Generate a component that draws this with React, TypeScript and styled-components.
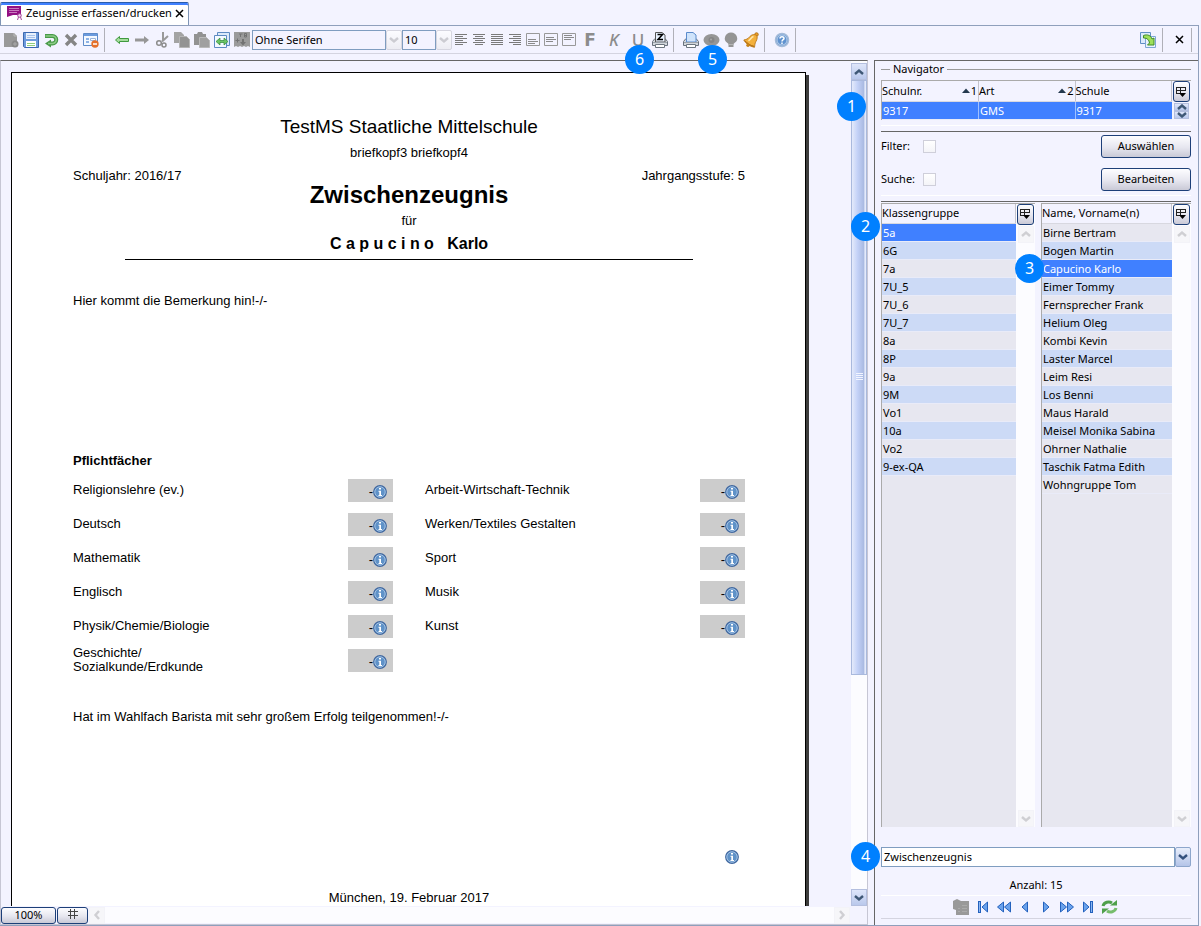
import React from "react";
import styled, { createGlobalStyle, css } from "styled-components";

const GlobalStyle = createGlobalStyle`
  *, *::before, *::after { box-sizing: border-box; }
  body {
    margin: 0;
    background: #f3f3ff;
    color: #000;
    font: 11px/16px "Noto Sans", "Open Sans", sans-serif;
  }
  button, select, input { font: inherit; color: inherit; margin: 0; }
  button { cursor: pointer; }
  h1, h2, h3, p { margin: 0; font: inherit; }
`;

const line = "#666";
const frameBlue = "#8f9fbc";
const navy = "#1d3f78";

/* ---------- window frame ---------- */

const Page = styled.div`
  display: flex;
  flex-direction: column;
  height: 100vh;
  min-height: 640px;
  padding: 2px 2px 0 0;
`;

const TabBar = styled.div`
  display: flex;
  flex: none;
  height: 23px;
`;

const Tab = styled.div`
  display: flex;
  align-items: center;
  gap: 3px;
  padding: 0 4px 2px 5px;
  background: #fff;
  border: 1px solid #7f95b5;
  border-top-color: #2a5cab;
  border-bottom: 0;
  border-radius: 2px 2px 0 0;
  box-shadow: inset 0 2px 0 #4080ff;
`;

const TabLabel = styled.span`
  font-size: 11px;
  white-space: nowrap;
`;

const PlainButton = styled.button`
  display: flex;
  align-items: center;
  justify-content: center;
  padding: 0;
  border: 0;
  background: none;
`;

const Frame = styled.div`
  display: flex;
  flex: 1;
  flex-direction: column;
  min-height: 0;
  border: 1px solid ${frameBlue};
  border-left: 0;
`;

const Main = styled.div`
  display: flex;
  flex: 1;
  min-height: 0;
`;

/* ---------- toolbar ---------- */

const Toolbar = styled.div`
  display: flex;
  flex: none;
  align-items: center;
  height: 28px;
  margin-bottom: 6px;
  padding-left: 1px;
  border-bottom: 1px solid #d4d4e0;
`;

const ToolButton = styled(PlainButton)<{ $w?: number }>`
  position: relative;
  flex: none;
  width: ${(p) => p.$w ?? 20}px;
  height: 24px;
`;

const Separator = styled.span<{ $before?: number; $after?: number }>`
  flex: none;
  width: 1px;
  height: 24px;
  margin: 0 ${(p) => p.$after ?? 7}px 0 ${(p) => p.$before ?? 3}px;
  background: #b0b0b8;
`;

const Spacer = styled.span`
  flex: 1;
`;

const Letter = styled.span<{ $bold?: boolean; $italic?: boolean; $under?: boolean }>`
  color: #8c8c8c;
  font-family: ${(p) => (p.$bold ? '"DejaVu Sans"' : '"Noto Sans"')}, sans-serif;
  font-size: 17px;
  font-style: ${(p) => (p.$italic ? "italic" : "normal")};
  font-weight: ${(p) => (p.$bold ? 700 : 500)};
  line-height: 20px;
  text-decoration: ${(p) => (p.$under ? "underline" : "none")};
`;

const Badge = styled.span<{ $left: string; $top: string }>`
  position: absolute;
  left: ${(p) => p.$left};
  top: ${(p) => p.$top};
  z-index: 5;
  width: 29px;
  height: 29px;
  border-radius: 50%;
  background: #0080ff;
  color: #fff;
  font: 16px/29px "Noto Sans", sans-serif;
  text-align: center;
`;

const Combo = styled.div<{ $w?: number }>`
  position: relative;
  display: flex;
  flex: none;
  width: ${(p) => (p.$w ? p.$w + "px" : "auto")};
  height: 20px;
`;

const ComboField = styled.select<{ $white?: boolean }>`
  appearance: none;
  flex: 1;
  min-width: 0;
  height: 100%;
  padding: 0 2px;
  border: 1px solid #7f9dc0;
  border-radius: 0;
  background: ${(p) => (p.$white ? "#fff" : "transparent")};
  opacity: 1;
  &:disabled { color: #000; opacity: 1; }
`;

const ArrowBox = styled(PlainButton)<{ $active?: boolean }>`
  flex: none;
  width: 16px;
  height: 100%;
  border: 1px solid ${(p) => (p.$active ? "#8da6cc" : "#d6d6e0")};
  border-radius: 2px;
  background: ${(p) =>
    p.$active ? "linear-gradient(#e8eefb, #b4c4e8)" : "linear-gradient(#fcfcff, #ededf3)"};
  color: ${(p) => (p.$active ? "#33507c" : "#ccccd2")};
`;

/* ---------- editor ---------- */

const Editor = styled.section`
  display: flex;
  flex: 1;
  flex-direction: column;
  min-width: 0;
  margin-right: 6px;
  border: 1px solid #c6c6d4;
  border-top-color: ${line};
`;

const EditorBody = styled.div`
  display: flex;
  flex: 1;
  min-height: 0;
`;

const Viewport = styled.div`
  flex: 1;
  min-width: 0;
  overflow: hidden;
  padding: 11px 0 0 10px;
`;

const Paper = styled.article`
  width: 795px;
  min-height: 1120px;
  padding: 42px 60px 0 61px;
  border: 1px solid #000;
  background: #fff;
  box-shadow: 3px 3px 0 #3c3c3c;
  font: 13px/16px "Liberation Sans", Arial, sans-serif;
`;

const SchoolName = styled.h1`
  font-size: 19px;
  line-height: 24px;
  text-align: center;
`;

const Centered = styled.p<{ $mt: number }>`
  margin-top: ${(p) => p.$mt}px;
  text-align: center;
`;

const Between = styled.div`
  display: flex;
  justify-content: space-between;
  margin-top: 7px;
`;

const DocTitle = styled.h2`
  font-size: 24px;
  font-weight: bold;
  line-height: 22px;
  text-align: center;
`;

const PupilName = styled.h3`
  margin: 5px 52px 0;
  padding-bottom: 5px;
  border-bottom: 1px solid #000;
  font-size: 16px;
  font-weight: bold;
  line-height: 20px;
  text-align: center;
  white-space: pre;
`;

const Remark = styled.p<{ $mt: number }>`
  margin-top: ${(p) => p.$mt}px;
`;

const SectionTitle = styled.h3`
  margin: 144px 0 4px;
  font-weight: bold;
`;

const Subjects = styled.div`
  display: grid;
  grid-template-columns: 1fr 1fr;
  column-gap: 32px;
`;

const SubjectColumn = styled.ul`
  margin: 0;
  padding: 0;
  list-style: none;
`;

const Subject = styled.li`
  display: flex;
  align-items: center;
  justify-content: space-between;
  height: 34px;
  line-height: 14px;
  white-space: pre-line;
`;

const Grade = styled.span`
  display: flex;
  align-items: center;
  justify-content: flex-end;
  width: 45px;
  height: 23px;
  padding: 4px 6px 0 0;
  background: #ccc;
`;

const PaperNote = styled.div`
  display: flex;
  justify-content: flex-end;
  margin-top: 125px;
  padding-right: 6px;
`;

const Scrollbar = styled.div`
  position: relative;
  display: flex;
  flex: none;
  flex-direction: column;
  width: 16px;
  padding-top: 2px;
  background: #fcfcff;
`;

const ScrollArrow = styled(PlainButton)<{ $active?: boolean }>`
  flex: none;
  width: 16px;
  height: 17px;
  border: 1px solid ${(p) => (p.$active ? "#b4bfdf" : "#f3f3f8")};
  background: ${(p) => (p.$active ? "linear-gradient(#dfe6fa, #b9c8ec)" : "#f6f6f9")};
  color: ${(p) => (p.$active ? "#3f5876" : "#cfcfd3")};
`;

const Track = styled.div`
  flex: 1;
  min-height: 0;
`;

const Thumb = styled.div`
  display: flex;
  align-items: center;
  justify-content: center;
  height: 73.5%;
  border: 1px solid #a9b9dd;
  background: linear-gradient(90deg, #e4eafb, #c3d1f7 40%, #a7b8e0 88%, #e4eafb 90%);
`;

const StatusBar = styled.div`
  display: flex;
  flex: none;
  align-items: center;
  height: 18px;
  padding-right: 17px;
`;

const raised = css`
  border: 1px solid ${navy};
  border-radius: 3px;
  background: linear-gradient(#fdfdff, #e6e6ef 55%, #c9c9d6);
`;

const StatusButton = styled.button<{ $w: number }>`
  ${raised}
  width: ${(p) => p.$w}px;
  height: 17px;
  margin-right: 1px;
  padding: 0;
  line-height: 14px;
`;

const HTrack = styled.div`
  flex: 1;
  height: 16px;
  background: #fcfcff;
`;

/* ---------- navigator ---------- */

const Panel = styled.aside`
  display: flex;
  flex: none;
  flex-direction: column;
  width: 324px;
  padding: 0 7px 6px 6px;
  border-left: 1px solid ${line};
  border-top: 1px solid ${line};
`;

const PanelTitle = styled.h2`
  display: flex;
  flex: none;
  align-items: center;
  gap: 3px;
  height: 16px;
  margin-bottom: 3px;
  &::before { content: ""; width: 9px; height: 1px; background: #999; }
  &::after { content: ""; flex: 1; height: 1px; background: #999; }
`;

const Rule = styled.hr<{ $mt?: number; $color?: string }>`
  flex: none;
  width: 100%;
  height: 1px;
  margin: ${(p) => p.$mt ?? 0}px 0 0;
  border: 0;
  background: ${(p) => p.$color ?? line};
`;

const GridBox = styled.div`
  position: relative;
  display: flex;
  border-top: 1px solid #aaa;
  border-left: 1px solid #aaa;
`;

const ListBox = styled(GridBox)`
  background: #fcfcff;
  min-height: 0;
`;

const TableArea = styled.div`
  flex: 1;
  min-width: 0;
  background: #e7e7f0;
`;

const DataTable = styled.table`
  width: 100%;
  border-collapse: collapse;
  table-layout: fixed;
`;

const HeadCell = styled.th`
  height: 20px;
  padding: 0;
  border-right: 1px solid #c4c4cc;
  border-bottom: 1px solid #d8d8e0;
  background: #f3f3ff;
  font-weight: normal;
  text-align: left;
  white-space: nowrap;
`;

const HeadFlex = styled.span`
  display: flex;
  align-items: center;
  justify-content: space-between;
`;

const Order = styled.span`
  display: flex;
  align-items: center;
  gap: 1px;
  padding-right: 1px;
`;

const BodyRow = styled.tr<{ $selected?: boolean }>`
  background: #e7e7f0;
  &:nth-child(even) { background: #ccdaf6; }
  && {
    ${(p) => p.$selected && css`background: #4080ff; color: #fff;`}
  }
`;

const Cell = styled.td<{ $split?: boolean }>`
  position: relative;
  height: 18px;
  padding: 0 0 0 1px;
  border-bottom: 1px solid #e9ebf8;
  ${(p) => p.$split && css`border-right: 1px solid #9fc0ff;`}
  line-height: 17px;
  white-space: nowrap;
`;

const SideColumn = styled.div`
  display: flex;
  flex: none;
  flex-direction: column;
  align-items: center;
  width: 19px;
`;

const ColumnButton = styled.button`
  ${raised}
  display: flex;
  flex: none;
  align-items: center;
  justify-content: center;
  width: 17px;
  height: 21px;
  margin-bottom: 1px;
  padding: 0;
`;

const SpinButton = styled(ScrollArrow)`
  width: 15px;
  height: 8px;
`;

const ActionRow = styled.div<{ $mt: number }>`
  display: flex;
  flex: none;
  align-items: center;
  height: 23px;
  margin-top: ${(p) => p.$mt}px;
`;

const ActionLabel = styled.label`
  display: flex;
  align-items: center;
  flex: 1;
  span { width: 42px; }
`;

const Check = styled.input.attrs({ type: "checkbox" })`
  appearance: none;
  width: 13px;
  height: 13px;
  border: 1px solid #cfcfda;
  background: linear-gradient(#fff, #f4f4f8);
`;

const ActionButton = styled.button`
  ${raised}
  width: 90px;
  height: 23px;
  padding: 0;
`;

const Lists = styled.div`
  display: grid;
  flex: 1;
  grid-template-columns: 154px 1fr;
  column-gap: 6px;
  min-height: 0;
  margin-bottom: 20px;
  padding-top: 1px;
`;

const Count = styled.p`
  flex: none;
  margin: 10px 0 2px;
  text-align: center;
`;

const Pager = styled.nav`
  display: flex;
  flex: none;
  align-items: center;
  justify-content: center;
  height: 22px;
  padding-right: 1px;
`;

/* ---------- icons ---------- */

const Svg = ({ w = 16, h = 16, children }: { w?: number; h?: number; children: React.ReactNode }) => (
  <svg width={w} height={h} viewBox={`0 0 ${w} ${h}`} aria-hidden="true">{children}</svg>
);

const gray = "#999";

const ReportIcon = () => (
  <Svg w={17} h={16}>
    <path d="M1 1h14v9H7L1 12z" fill="#930f83" />
    <path d="M3 3.500h10M3 5.500h10M3 7.500h8" stroke="#c77abd" />
    <circle cx="13.500" cy="10.500" r="1.800" fill="#f1d3ee" stroke="#a5489b" />
    <path d="M12.500 12l-1 3M14.500 12l1 3" stroke="#a5489b" />
  </Svg>
);
const NewIcon = () => (
  <Svg><path d="M1 1h10l3 3v11H1z" fill={gray} /><path d="M11 1v3h3" stroke="#bbb" fill="none" /><circle cx="12" cy="12" r="3.500" fill="#888" /><path d="M10 12h4M12 10v4" stroke="#aaa" /></Svg>
);
const SaveIcon = () => (
  <Svg>
    <path d="M.5.5h15v15h-14l-1-1z" fill="#6e9bdd" stroke="#3c69b0" />
    <path d="M3 1h10v6H3z" fill="#e8f0fc" /><path d="M4 3.500h8M4 5.500h8" stroke="#a8c2ea" />
    <path d="M3 9h10v6H3z" fill="#fff" /><path d="M4 11.500h8M4 13.500h8" stroke="#8fce7c" />
  </Svg>
);
const UndoIcon = () => (
  <Svg><path d="M2 4h7.500a3.500 3.500 0 0 1 0 7.500H7" fill="none" stroke="#489a48" strokeWidth="4" /><path d="M8 7.500v8L2 11.500z" fill="#489a48" /><path d="M2.500 4h7a3.500 3.500 0 0 1 0 7.500H5" fill="none" stroke="#8ccc86" strokeWidth="1.500" /></Svg>
);
const DeleteIcon = () => (
  <Svg><path d="M3 3l10 10M13 3L3 13" stroke="#858585" strokeWidth="3.400" /></Svg>
);
const FormIcon = () => (
  <Svg>
    <path d="M.5 1.500h14v12H.5z" fill="#f4f8ff" stroke="#5f8bc9" /><path d="M1 2h13v2H1z" fill="#6b9add" />
    <path d="M3 7h3M3 10h3" stroke="#6b9add" strokeWidth="1.500" /><path d="M7.500 6.500h5v2h-5z" fill="#fff" stroke="#9bb4da" />
    <circle cx="12" cy="12" r="3.700" fill="#e5702a" /><path d="M10 12h4" stroke="#fff" strokeWidth="1.500" />
  </Svg>
);
const ArrowIcon = ({ right }: { right?: boolean }) => (
  <Svg>
    {right
      ? <path d="M1 6.500h9V4l5 4-5 4V9.500H1z" fill="#979797" />
      : <path d="M14.500 6.500h-9V4.500L1.500 8l4 3.500v-2h9z" fill="#a5dc9d" stroke="#3f9a3f" />}
  </Svg>
);
const CutIcon = () => (
  <Svg><path d="M9 0v8M14 4L8 9.500" stroke="#999" strokeWidth="2" /><circle cx="5" cy="11" r="2.300" fill="none" stroke="#8c8c8c" strokeWidth="1.500" /><circle cx="10" cy="13" r="2" fill="none" stroke="#8c8c8c" strokeWidth="1.500" /></Svg>
);
const CopyIcon = () => (
  <Svg><path d="M0 0h7l3 3v8H0z" fill="#a3a3a3" /><path d="M5.500 4.500h7l3 3v8h-10z" fill="#939393" stroke="#b5b5b5" /></Svg>
);
const PasteIcon = () => (
  <Svg><path d="M0 2h3l1-2h4l1 2h3v11H0z" fill="#929292" /><path d="M5.500 5.500h7l3 3v7h-10z" fill="#a0a0a0" stroke="#b9b9b9" /></Svg>
);
const SwapIcon = () => (
  <Svg>
    <path d="M3.500.5h12v13h-12z" fill="#dce9fa" stroke="#5d8ac2" /><path d="M.5 3.500h12v12H.5z" fill="#f4f9ff" stroke="#5d8ac2" />
    <path d="M2 9.500l4-3.500v2.500h4V6l4 3.500-4 3.500v-2.500H6V13z" fill="#6cc466" stroke="#2f8a35" strokeWidth=".7" />
  </Svg>
);
const BlockIcon = () => (
  <Svg>
    <path d="M0 0h16v15l-2-1-2 1-2-1-2 1-2-1-2 1-2-1-2 1z" fill="#9b9b9b" />
    <path d="M5 2h3.500M6.500 2v3M10.500 1.500V5h2V1.500zM10.500 3.500h2M1.500 8.500h4M3.500 6.500v4" stroke="#737373" fill="none" />
    <path d="M8 7h2v3h2l-3 3.500L6 10h2z" fill="#737373" />
  </Svg>
);
type AlignKind = "left" | "center" | "justify" | "right";
const AlignIcon = ({ kind }: { kind: AlignKind }) => (
  <Svg w={13} h={12}>
    {[0, 1, 2, 3, 4, 5].map((i) => {
      const w = kind === "justify" || i % 2 === 0 ? 12 : 8;
      const x = kind === "right" ? 12 - w : kind === "center" ? (12 - w) / 2 : 0;
      return <rect key={i} x={x} y={i * 2} width={w} height={1} fill="#7a7a7a" />;
    })}
  </Svg>
);
const VAlignIcon = ({ y }: { y: number }) => (
  <Svg w={14} h={13}>
    <path d="M.5.5h13v12H.5z" fill="none" stroke="#999" />
    <path d={`M2 ${y}.5h8M2 ${y + 2}.5h10M2 ${y + 4}.5h7`} stroke="#8a8a8a" />
  </Svg>
);
const PrinterIcon = ({ z }: { z?: boolean }) => (
  <Svg w={16} h={16}>
    <path d="M.5 9.500L3 6.500h10l2.500 3v4H.5z" fill="#d3d7dc" stroke="#68717c" />
    <path d="M3.500.5h6.500l3 2.500v7h-9.500z" fill={z ? "#e9f2ff" : "#cfe3fb"} stroke={z ? "#555" : "#5b8bcc"} />
    {z && <path d="M5.500 2.500h5L6 7.500h5" fill="none" stroke="#000" strokeWidth="1.500" />}
    <path d="M1 10.500h14" stroke="#9aa2ab" /><path d="M3.500 12.500h9v3h-9z" fill="#fff" stroke="#6c7680" />
  </Svg>
);
const EyeIcon = () => (
  <Svg w={17}><ellipse cx="8.500" cy="8" rx="8" ry="6" fill="#969696" /><circle cx="8.500" cy="8" r="3" fill="#858585" /><circle cx="8" cy="7.500" r="1" fill="#aaa" /></Svg>
);
const BulbIcon = () => (
  <Svg><path d="M8 .5a6.500 5.800 0 0 1 3.500 10.500L10.500 12v3h-5v-3L4.500 11A6.500 5.800 0 0 1 8 .5z" fill="#949494" /><path d="M5.500 12.500h5" stroke="#b3b3b3" /></Svg>
);
const BellIcon = () => (
  <Svg>
    <circle cx="13.500" cy="2.500" r="1.800" fill="#e79a27" stroke="#b06f14" strokeWidth=".8" />
    <path d="M13.500 3.500C11 1.500 8 3 6.500 5 5 7 3 7.500.8 8c1.700 3.500 6 6.500 10.700 7.300.3-2 .3-4 1.500-6 1.200-2.200 1.700-4.300.5-5.800z" fill="#f3b03c" stroke="#b8751a" strokeWidth=".9" />
    <path d="M2 8.800c2.500 3 5.500 4.700 9 5.500" fill="none" stroke="#a8640c" />
    <path d="M10.500 4.500C8.500 5 7.500 7.500 5.500 8.800" fill="none" stroke="#ffe7ae" strokeWidth="1.600" />
    <circle cx="5" cy="13.300" r="1.700" fill="#c78319" />
  </Svg>
);
const HelpIcon = () => (
  <Svg>
    <circle cx="8" cy="8" r="6.500" fill="#5f92cf" stroke="#a4bbd9" strokeWidth="1.500" /><circle cx="8" cy="8" r="5" fill="none" stroke="#dce8f7" strokeWidth=".7" />
    <path d="M6 6.500c0-2.500 4-2.500 4 0 0 1.200-2 1.300-2 3M8 10.500V12" fill="none" stroke="#fff" strokeWidth="1.500" />
  </Svg>
);
const DetachIcon = () => (
  <Svg>
    <path d="M.5.5h10v11H.5z" fill="#dcebfd" stroke="#5f8fc4" /><path d="M5.500 4.500h10v11h-10z" fill="#e9f3ff" stroke="#7ea6d4" />
    <path d="M3.500 3.500c4-1.500 7.500 0 8.500 3.500l2-1v7H7.500L9.500 11C9 8 7.500 6 3.500 6z" fill="#9ee05a" stroke="#3f8c25" />
  </Svg>
);
const CloseIcon = ({ s = 9 }: { s?: number }) => (
  <Svg w={s} h={s}><path d={`M1 1l${s - 2} ${s - 2}M${s - 1} 1L1 ${s - 1}`} stroke="#000" strokeWidth="1.500" /></Svg>
);
const InfoIcon = () => (
  <Svg w={14} h={14}>
    <circle cx="7" cy="7" r="6.300" fill="#5f92c8" stroke="#41689f" strokeWidth="1.200" />
    <circle cx="7" cy="7" r="5.200" fill="none" stroke="#a9c6e6" strokeWidth=".9" />
    <path d="M6 3h2v1.500H6zM5.500 5.800H8V10h1v1H5.500v-1h.8V6.800h-.8z" fill="#fff" />
  </Svg>
);
type Dir = "up" | "down" | "left" | "right";
const turns: Record<Dir, number> = { down: 0, left: 90, up: 180, right: 270 };
const Chevron = ({ dir, h = 10 }: { dir: Dir; h?: number }) => (
  <svg width="10" height={h} viewBox={`0 ${(10 - h) / 2} 10 ${h}`} aria-hidden="true">
    <path d="M1 3l4 3.500L9 3" transform={`rotate(${turns[dir]} 5 5)`} fill="none" stroke="currentColor" strokeWidth="2.400" />
  </svg>
);
const GripIcon = () => (
  <Svg w={7} h={8}><path d="M0 .5h7M0 2.500h7M0 4.500h7M0 6.500h7" stroke="#f2f5ff" /></Svg>
);
const ColumnsIcon = () => (
  <Svg w={11} h={12}>
    <path d="M.5 1.500h9M.5 1v7M.5 4.500h9M4.500 1v7M9.500 1v4M.5 7.500h4" stroke="#222" fill="none" />
    <path d="M3 7h7l-3.500 4z" fill="#000" />
  </Svg>
);
const SortIcon = () => <Svg w={8} h={5}><path d="M0 5l4-4.500L8 5z" fill="#24384e" /></Svg>;
const GridIcon = () => <Svg w={10} h={10}><path d="M2.500 0v10M6.500 0v10M0 2.500h10M0 6.500h10" stroke="#444" /></Svg>;

const PagerGlyph = ({ d, bar }: { d: string; bar?: number }) => (
  <Svg w={16} h={14}>
    <path d={d} fill="#6aa2ec" stroke="#2361bd" />
    {bar !== undefined && <rect x={bar} y={1.5} width={2} height={11} fill="#8bb6f2" stroke="#2361bd" />}
  </Svg>
);
const TableGrayIcon = () => (
  <Svg w={17}><path d="M0 2l4-2 4 2h8v14H3v-5l-3-1z" fill="#999" /><path d="M9 6.500h5M5 9.500h2M9 9.500h5M5 12.500h2M9 12.500h5" stroke="#aaa" /></Svg>
);
const RefreshIcon = () => (
  <Svg w={17}>
    <path d="M2 7c1-4 6-5 9-3" fill="none" stroke="#4fa04b" strokeWidth="3" /><path d="M9 6.500h7V1z" fill="#4fa04b" />
    <path d="M15 9c-1 4-6 5-9 3" fill="none" stroke="#76bd6c" strokeWidth="3" /><path d="M8 9.500H1V15z" fill="#4fa04b" />
  </Svg>
);

/* ---------- data ---------- */

const groups = ["5a", "6G", "7a", "7U_5", "7U_6", "7U_7", "8a", "8P", "9a", "9M", "Vo1", "10a", "Vo2", "9-ex-QA"];
const pupils = [
  "Birne Bertram", "Bogen Martin", "Capucino Karlo", "Eimer Tommy", "Fernsprecher Frank",
  "Helium Oleg", "Kombi Kevin", "Laster Marcel", "Leim Resi", "Los Benni", "Maus Harald",
  "Meisel Monika Sabina", "Ohrner Nathalie", "Taschik Fatma Edith", "Wohngruppe Tom",
];
const subjects = [
  ["Religionslehre (ev.)", "Deutsch", "Mathematik", "Englisch", "Physik/Chemie/Biologie", "Geschichte/\nSozialkunde/Erdkunde"],
  ["Arbeit-Wirtschaft-Technik", "Werken/Textiles Gestalten", "Sport", "Musik", "Kunst"],
];

type Tool = [string, React.ReactNode];
const fileTools: Tool[] = [
  ["Neu", <NewIcon />], ["Speichern", <SaveIcon />], ["Rückgängig", <UndoIcon />],
  ["Löschen", <DeleteIcon />], ["Formular", <FormIcon />],
];
const editTools: Tool[] = [
  ["Zurück", <ArrowIcon />], ["Vor", <ArrowIcon right />], ["Ausschneiden", <CutIcon />],
  ["Kopieren", <CopyIcon />], ["Einfügen", <PasteIcon />], ["Austauschen", <SwapIcon />],
  ["Textbaustein", <BlockIcon />],
];
const alignTools: Tool[] = [
  ["Linksbündig", <AlignIcon kind="left" />], ["Zentriert", <AlignIcon kind="center" />],
  ["Blocksatz", <AlignIcon kind="justify" />], ["Rechtsbündig", <AlignIcon kind="right" />],
  ["Unten", <VAlignIcon y={6} />], ["Mitte", <VAlignIcon y={4} />], ["Oben", <VAlignIcon y={2} />],
];
const pagerTools: [string, React.ReactNode, number][] = [
  ["Liste", <TableGrayIcon />, 22],
  ["Erster", <PagerGlyph d="M12.500 2v10L7 7z" bar={3.5} />, 21],
  ["Schnell zurück", <PagerGlyph d="M7.500 2v10L1.500 7zM14.500 2v10l-6-5z" />, 21],
  ["Zurück", <PagerGlyph d="M10.500 2v10L5 7z" />, 21],
  ["Weiter", <PagerGlyph d="M5.500 2v10L11 7z" />, 21],
  ["Schnell vor", <PagerGlyph d="M1.500 2v10l6-5zM8.500 2v10l6-5z" />, 21],
  ["Letzter", <PagerGlyph d="M3.500 2v10L9 7z" bar={10.5} />, 21],
  ["Aktualisieren", <RefreshIcon />, 22],
];

/* ---------- parts ---------- */

const Tools = ({ items, w }: { items: Tool[]; w?: number }) => (
  <>
    {items.map(([name, icon]) => (
      <ToolButton key={name} $w={w} aria-label={name}>{icon}</ToolButton>
    ))}
  </>
);

interface NameListProps {
  title: string;
  rows: string[];
  selected: string;
  rowBadge?: string;
  badge?: string;
}

const NameList = ({ title, rows, selected, rowBadge, badge }: NameListProps) => (
  <ListBox>
    {badge && <Badge $left="-31px" $top="8px">{badge}</Badge>}
    <TableArea>
      <DataTable>
        <thead>
          <tr><HeadCell scope="col"><HeadFlex>{title}</HeadFlex></HeadCell></tr>
        </thead>
        <tbody>
          {rows.map((name) => (
            <BodyRow key={name} $selected={name === selected}>
              <Cell>
                {name}
                {rowBadge && name === selected && <Badge $left="-27px" $top="-6px">{rowBadge}</Badge>}
              </Cell>
            </BodyRow>
          ))}
        </tbody>
      </DataTable>
    </TableArea>
    <SideColumn>
      <ColumnButton aria-label={`Spalten ${title}`}><ColumnsIcon /></ColumnButton>
      <ScrollArrow aria-label="Nach oben"><Chevron dir="up" /></ScrollArrow>
      <Track />
      <ScrollArrow aria-label="Nach unten"><Chevron dir="down" /></ScrollArrow>
    </SideColumn>
  </ListBox>
);

const Certificate = () => (
  <Paper>
    <SchoolName>TestMS Staatliche Mittelschule</SchoolName>
    <Centered $mt={6}>briefkopf3 briefkopf4</Centered>
    <Between><span>Schuljahr: 2016/17</span><span>Jahrgangsstufe: 5</span></Between>
    <DocTitle>Zwischenzeugnis</DocTitle>
    <Centered $mt={7}>für</Centered>
    <PupilName>{"C a p u c i n o   Karlo"}</PupilName>
    <Remark $mt={33}>Hier kommt die Bemerkung hin!-/-</Remark>
    <SectionTitle>Pflichtfächer</SectionTitle>
    <Subjects>
      {subjects.map((column) => (
        <SubjectColumn key={column[0]}>
          {column.map((name) => (
            <Subject key={name}>
              <span>{name}</span>
              <Grade>-<PlainButton aria-label={`Info ${name}`}><InfoIcon /></PlainButton></Grade>
            </Subject>
          ))}
        </SubjectColumn>
      ))}
    </Subjects>
    <Remark $mt={32}>Hat im Wahlfach Barista mit sehr großem Erfolg teilgenommen!-/-</Remark>
    <PaperNote><PlainButton aria-label="Info"><InfoIcon /></PlainButton></PaperNote>
    <Centered $mt={26}>München, 19. Februar 2017</Centered>
  </Paper>
);

const Navigator = () => (
  <Panel>
    <PanelTitle>Navigator</PanelTitle>
    <GridBox>
      <TableArea>
        <DataTable>
          <thead>
            <tr>
              <HeadCell scope="col"><HeadFlex>Schulnr.<Order><SortIcon />1</Order></HeadFlex></HeadCell>
              <HeadCell scope="col"><HeadFlex>Art<Order><SortIcon />2</Order></HeadFlex></HeadCell>
              <HeadCell scope="col"><HeadFlex>Schule</HeadFlex></HeadCell>
            </tr>
          </thead>
          <tbody>
            <BodyRow $selected><Cell $split>9317</Cell><Cell $split>GMS</Cell><Cell>9317</Cell></BodyRow>
          </tbody>
        </DataTable>
      </TableArea>
      <SideColumn>
        <ColumnButton aria-label="Spalten Schule"><ColumnsIcon /></ColumnButton>
        <SpinButton $active aria-label="Vorige Schule"><Chevron dir="up" h={6} /></SpinButton>
        <SpinButton $active aria-label="Nächste Schule"><Chevron dir="down" h={6} /></SpinButton>
      </SideColumn>
    </GridBox>
    <Rule $mt={5} $color="#fff" />
    <Rule $mt={5} />
    <ActionRow $mt={3}>
      <ActionLabel><span>Filter:</span><Check /></ActionLabel>
      <ActionButton>Auswählen</ActionButton>
    </ActionRow>
    <ActionRow $mt={10}>
      <ActionLabel><span>Suche:</span><Check /></ActionLabel>
      <ActionButton>Bearbeiten</ActionButton>
    </ActionRow>
    <Rule $mt={4} $color="#fff" />
    <Rule $mt={5} />
    <Lists>
      <NameList title="Klassengruppe" rows={groups} selected="5a" badge="2" />
      <NameList title="Name, Vorname(n)" rows={pupils} selected="Capucino Karlo" rowBadge="3" />
    </Lists>
    <Combo>
      <ComboField $white aria-label="Zeugnisart"><option>Zwischenzeugnis</option></ComboField>
      <ArrowBox $active aria-label="Zeugnisart öffnen"><Chevron dir="down" /></ArrowBox>
      <Badge $left="-30px" $top="-5px">4</Badge>
    </Combo>
    <Count>Anzahl: 15</Count>
    <Rule $color="#fff" />
    <Pager aria-label="Datensätze">
      {pagerTools.map(([name, icon, w]) => (
        <ToolButton key={name} $w={w} aria-label={name}>{icon}</ToolButton>
      ))}
    </Pager>
    <Rule $color="#d4d4e0" />
  </Panel>
);

export default function App() {
  return (
    <Page>
      <GlobalStyle />
      <TabBar>
        <Tab>
          <ReportIcon />
          <TabLabel>Zeugnisse erfassen/drucken</TabLabel>
          <PlainButton aria-label="Tab schließen"><CloseIcon /></PlainButton>
        </Tab>
      </TabBar>
      <Frame>
        <Toolbar>
          <Tools items={fileTools} />
          <Separator />
          <Tools items={editTools} />
          <Combo $w={150}>
            <ComboField disabled aria-label="Schriftart"><option>Ohne Serifen</option></ComboField>
            <ArrowBox disabled aria-label="Schriftart öffnen"><Chevron dir="down" /></ArrowBox>
          </Combo>
          <Combo $w={50}>
            <ComboField disabled aria-label="Schriftgröße"><option>10</option></ComboField>
            <ArrowBox disabled aria-label="Schriftgröße öffnen"><Chevron dir="down" /></ArrowBox>
          </Combo>
          <Tools items={alignTools} w={18} />
          <ToolButton $w={24}><Letter $bold>F</Letter></ToolButton>
          <ToolButton $w={24}><Letter $italic>K</Letter></ToolButton>
          <ToolButton $w={24}><Letter $under>U</Letter><Badge $left="-1px" $top="17px">6</Badge></ToolButton>
          <ToolButton aria-label="Zeugnis drucken"><PrinterIcon z /></ToolButton>
          <Separator />
          <ToolButton aria-label="Drucken"><PrinterIcon /></ToolButton>
          <ToolButton aria-label="Vorschau"><EyeIcon /><Badge $left="-3px" $top="17px">5</Badge></ToolButton>
          <ToolButton aria-label="Hinweis"><BulbIcon /></ToolButton>
          <ToolButton aria-label="Erinnerung"><BellIcon /></ToolButton>
          <Separator />
          <ToolButton aria-label="Hilfe"><HelpIcon /></ToolButton>
          <Separator />
          <Spacer />
          <ToolButton aria-label="Ablösen"><DetachIcon /></ToolButton>
          <Separator $before={4} $after={6} />
          <ToolButton aria-label="Schließen"><CloseIcon /></ToolButton>
          <Separator $before={2} $after={6} />
        </Toolbar>
        <Main>
          <Editor>
            <EditorBody>
              <Viewport><Certificate /></Viewport>
              <Scrollbar>
                <ScrollArrow $active aria-label="Nach oben"><Chevron dir="up" /></ScrollArrow>
                <Track><Thumb><GripIcon /></Thumb></Track>
                <ScrollArrow $active aria-label="Nach unten"><Chevron dir="down" /></ScrollArrow>
                <Badge $left="-14px" $top="31px">1</Badge>
              </Scrollbar>
            </EditorBody>
            <StatusBar>
              <StatusButton $w={55}>100%</StatusButton>
              <StatusButton $w={31} aria-label="Raster"><GridIcon /></StatusButton>
              <ScrollArrow aria-label="Nach links"><Chevron dir="left" /></ScrollArrow>
              <HTrack />
              <ScrollArrow aria-label="Nach rechts"><Chevron dir="right" /></ScrollArrow>
            </StatusBar>
          </Editor>
          <Navigator />
        </Main>
      </Frame>
    </Page>
  );
}
